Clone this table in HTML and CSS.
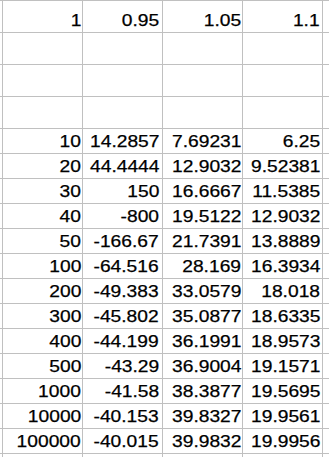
FILE: index.html
```html
<!DOCTYPE html>
<html>
<head>
<meta charset="utf-8">
<link rel="stylesheet" href="styles.css">
</head>
<body>
<div class="sheet">
  <div class="c"></div><div class="c"><span class="v">1</span></div><div class="c"><span class="v">0.95</span></div><div class="c"><span class="v">1.05</span></div><div class="c"><span class="v">1.1</span></div><div class="c"></div>
  <div class="c"></div><div class="c"></div><div class="c"></div><div class="c"></div><div class="c"></div><div class="c"></div>
  <div class="c"></div><div class="c"></div><div class="c"></div><div class="c"></div><div class="c"></div><div class="c"></div>
  <div class="c"></div><div class="c"></div><div class="c"></div><div class="c"></div><div class="c"></div><div class="c"></div>
  <div class="c"></div><div class="c"><span class="v">10</span></div><div class="c"><span class="v">14.2857</span></div><div class="c"><span class="v">7.69231</span></div><div class="c"><span class="v">6.25</span></div><div class="c"></div>
  <div class="c"></div><div class="c"><span class="v">20</span></div><div class="c"><span class="v">44.4444</span></div><div class="c"><span class="v">12.9032</span></div><div class="c"><span class="v">9.52381</span></div><div class="c"></div>
  <div class="c"></div><div class="c"><span class="v">30</span></div><div class="c"><span class="v">150</span></div><div class="c"><span class="v">16.6667</span></div><div class="c"><span class="v">11.5385</span></div><div class="c"></div>
  <div class="c"></div><div class="c"><span class="v">40</span></div><div class="c"><span class="v">-800</span></div><div class="c"><span class="v">19.5122</span></div><div class="c"><span class="v">12.9032</span></div><div class="c"></div>
  <div class="c"></div><div class="c"><span class="v">50</span></div><div class="c"><span class="v">-166.67</span></div><div class="c"><span class="v">21.7391</span></div><div class="c"><span class="v">13.8889</span></div><div class="c"></div>
  <div class="c"></div><div class="c"><span class="v">100</span></div><div class="c"><span class="v">-64.516</span></div><div class="c"><span class="v">28.169</span></div><div class="c"><span class="v">16.3934</span></div><div class="c"></div>
  <div class="c"></div><div class="c"><span class="v">200</span></div><div class="c"><span class="v">-49.383</span></div><div class="c"><span class="v">33.0579</span></div><div class="c"><span class="v">18.018</span></div><div class="c"></div>
  <div class="c"></div><div class="c"><span class="v">300</span></div><div class="c"><span class="v">-45.802</span></div><div class="c"><span class="v">35.0877</span></div><div class="c"><span class="v">18.6335</span></div><div class="c"></div>
  <div class="c"></div><div class="c"><span class="v">400</span></div><div class="c"><span class="v">-44.199</span></div><div class="c"><span class="v">36.1991</span></div><div class="c"><span class="v">18.9573</span></div><div class="c"></div>
  <div class="c"></div><div class="c"><span class="v">500</span></div><div class="c"><span class="v">-43.29</span></div><div class="c"><span class="v">36.9004</span></div><div class="c"><span class="v">19.1571</span></div><div class="c"></div>
  <div class="c"></div><div class="c"><span class="v">1000</span></div><div class="c"><span class="v">-41.58</span></div><div class="c"><span class="v">38.3877</span></div><div class="c"><span class="v">19.5695</span></div><div class="c"></div>
  <div class="c"></div><div class="c"><span class="v">10000</span></div><div class="c"><span class="v">-40.153</span></div><div class="c"><span class="v">39.8327</span></div><div class="c"><span class="v">19.9561</span></div><div class="c"></div>
  <div class="c"></div><div class="c"><span class="v">100000</span></div><div class="c"><span class="v">-40.015</span></div><div class="c"><span class="v">39.9832</span></div><div class="c"><span class="v">19.9956</span></div><div class="c"></div>
  <div class="c"></div><div class="c"></div><div class="c"></div><div class="c"></div><div class="c"></div><div class="c"></div>
</div>
</body>
</html>
```

FILE: styles.css
```css
html, body {
  margin: 0;
  padding: 0;
  background: #ffffff;
}

.sheet {
  width: 329px;
  height: 457px;
  box-sizing: border-box;
  padding-top: 1px;
  background: #c0c0c0;
  display: grid;
  grid-template-columns: 2px repeat(4, 79px) 1fr;
  grid-template-rows: repeat(4, 31px) repeat(13, 24px) 1fr;
  gap: 1px;
  overflow: hidden;
  font-family: "Liberation Sans", Arial, sans-serif;
  font-size: 17px;
  line-height: 17px;
  color: #000000;
}

.c {
  background: #ffffff;
  display: flex;
  justify-content: flex-end;
  align-items: flex-end;
  padding: 0 1px 3px 0;
  overflow: visible;
  white-space: nowrap;
}

.c:nth-child(6n+3) {
  padding-right: 3px;
}

.c:nth-child(6n+4) {
  padding-right: 1px;
}

.c:nth-child(6n+5) {
  padding-right: 2px;
}

.v {
  display: inline-block;
  transform: scaleX(1.13);
  transform-origin: right bottom;
  -webkit-text-stroke: 0.25px #000000;
}
```
